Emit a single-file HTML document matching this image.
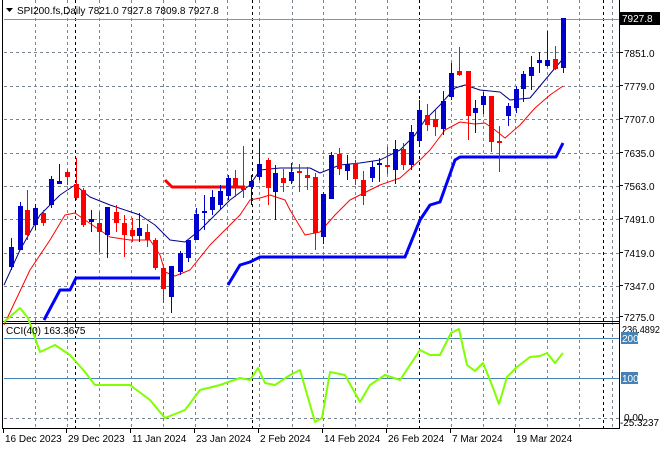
<!DOCTYPE html><html><head><meta charset="utf-8"><style>
body{margin:0;width:660px;height:450px;background:#fff;overflow:hidden;font-family:"Liberation Sans",sans-serif}
svg{position:absolute;left:0;top:0}
text{font-family:"Liberation Sans",sans-serif;font-size:10px;fill:#000}
</style></head><body>
<svg id="s" width="660" height="450" xmlns="http://www.w3.org/2000/svg"></svg>
<script>
var s=document.getElementById('s'),h='';
function L(x1,y1,x2,y2,c,w,d){h+='<line x1="'+x1+'" y1="'+y1+'" x2="'+x2+'" y2="'+y2+'" stroke="'+c+'" stroke-width="'+(w||1)+'"'+(d?' stroke-dasharray="'+d+'"':'')+' shape-rendering="crispEdges"/>';}
function P(pts,c,w){h+='<polyline fill="none" stroke="'+c+'" stroke-width="'+w+'" stroke-linejoin="round" points="'+pts+'"/>';}
function T(x,y,t,a){h+='<text x="'+x+'" y="'+y+'"'+(a||'')+'>'+t+'</text>';}
var gx=[35,67,99,131,163,195,227,259,292,323,355,387,451,483,515,547,579,612];
gx.forEach(function(x){L(x+.5,0,x+.5,321,'#7a8590',1,'3,3');L(x+.5,322,x+.5,428,'#7a8590',1,'3,3');});
[75,252,419,603].forEach(function(x){L(x+.5,0,x+.5,428,'#000',1,'3,3');});
[52,86,119,153,186,219,253,286,317].forEach(function(y){L(4,y+.5,619,y+.5,'#7a8590',1,'3,3');});
L(4,19.5,619,19.5,'#8a949c',1);
L(2.5,0,2.5,428,'#000');L(619.5,0,619.5,428,'#000');
L(2,321.5,620,321.5,'#000');L(2,323.5,620,323.5,'#000');L(2,428.5,620,428.5,'#000');
P('4,325 30,270 50,240 65,215 75,213 85,220 110,237 130,240 150,240 160,255 165,272 175,276 190,270 210,245 225,230 240,215 250,200 260,198 270,195 285,200 290,210 305,235 320,232 335,215 350,200 360,195 380,185 400,178 420,160 430,150 445,130 460,122 475,124 485,123 495,130 505,138 520,125 535,108 550,95 563,86','#f00',1);
P('4,285 20,250 40,215 60,195 75,185 90,197 110,205 140,215 155,225 170,240 185,242 200,230 230,200 250,185 260,170 280,168 310,168 320,173 340,165 360,163 380,160 400,150 415,135 425,120 440,105 455,88 465,85 480,90 500,92 510,100 530,98 545,80 555,68 562,60','#00008b',1);
P('44,320 60,290 70,290 76,278 160,278','#0000ff',3);
P('228,285 240,265 250,262 260,257 405,257 420,220 430,205 440,202 455,160 460,157 556,157 563,143','#0000ff',3);
P('165,180 172,187 245,187','#f00',3);
var C=[[11,238,247,267,270,1],[20,202,206,250,250,1],[27,190,210,235,240,0],[35,204,208,225,230,1],[43,210,213,223,226,0],[51,176,179,205,208,1],[59,164,181,184,184,1],[67,170,172,177,185,0],[76,158,184,198,200,0],[83,188,190,225,227,0],[91,210,219,222,232,1],[99,212,223,232,252,0],[107,207,207,235,258,1],[116,205,212,223,232,0],[124,215,223,235,257,0],[132,218,230,236,242,0],[139,213,228,236,242,1],[147,224,232,240,247,0],[155,238,240,268,270,0],[163,266,268,289,303,0],[171,266,266,297,313,1],[180,251,253,272,275,1],[188,240,240,258,262,1],[196,208,214,240,240,1],[204,195,211,213,230,1],[212,190,197,210,215,1],[220,185,191,205,210,1],[228,175,178,196,200,1],[235,170,178,187,197,0],[243,146,188,190,198,0],[251,175,181,187,205,1],[259,139,164,177,180,1],[268,158,160,188,205,0],[275,165,173,192,220,1],[283,169,178,183,192,0],[291,163,172,181,184,1],[299,164,171,173,192,0],[307,167,175,178,190,0],[315,173,177,233,250,0],[323,192,194,237,244,1],[331,152,155,199,199,1],[339,148,154,169,175,0],[347,155,164,171,180,1],[355,160,163,179,185,0],[363,171,180,196,205,0],[372,161,167,178,182,1],[379,158,163,165,182,1],[387,147,165,167,174,0],[395,140,149,170,184,1],[403,143,149,165,170,0],[411,125,132,165,170,1],[419,100,110,141,145,1],[427,104,115,125,131,0],[435,110,119,127,136,0],[443,91,101,129,135,1],[451,63,73,97,100,1],[459,47,71,75,76,0],[468,71,71,116,140,0],[475,100,108,113,133,1],[483,92,96,105,114,1],[491,96,96,142,152,0],[499,126,141,143,172,0],[508,103,106,116,126,1],[516,86,89,108,113,1],[523,71,74,89,102,1],[531,56,67,76,90,1],[539,52,60,63,73,1],[547,31,60,66,67,1],[555,46,59,69,70,0],[563,18,18,68,73,1]];
C.forEach(function(c){var col=c[5]?'#0000cc':'#f00';L(c[0]+.5,c[1],c[0]+.5,c[4],col,1);var t=Math.min(c[2],c[3]),b=Math.max(c[2],c[3]);if(b-t<1)b=t+1;h+='<rect x="'+(c[0]-2)+'" y="'+t+'" width="5" height="'+(b-t)+'" fill="'+col+'"/>';});
L(4,338.5,619,338.5,'#4682b4');L(4,378.5,619,378.5,'#4682b4');L(4,418.5,619,418.5,'#7a8590',1,'3,3');
P('4,322 20,308 28,318 40,352 55,345 70,355 85,372 95,385 130,385 150,400 165,418 185,410 200,390 220,385 240,378 250,380 258,368 265,383 275,385 290,375 300,370 315,422 322,418 330,372 345,375 360,402 370,385 385,375 400,380 420,350 430,355 440,355 451,333 459,329 467,365 475,371 483,363 490,380 499,404 507,377 517,367 530,357 540,356 547,353 555,363 563,353','#7fff00',2);
h+='<polygon points="6,8 13,8 9.5,12" fill="#000"/>';
T(17,14,'SPI200.fs,Daily  7821.0 7927.8 7809.8 7927.8');
T(6,334,'CCI(40) 163.3675');
h+='<rect x="620" y="12" width="40" height="13" fill="#000"/>';
T(622,22,'7927.8',' style="fill:#fff"');
[['7851.0',57],['7779.0',90],['7707.0',123],['7635.0',157],['7563.0',190],['7491.0',223],['7419.0',257],['7347.0',290],['7275.0',321]].forEach(function(a){L(619,a[1]-4.5,623,a[1]-4.5,'#000');T(624,a[1],a[0]);});
T(622,333,'236.4892',' textLength="38" lengthAdjust="spacingAndGlyphs"');
h+='<rect x="621" y="332" width="17" height="12" fill="#4682b4"/>';T(622,342,'200',' style="fill:#fff"');
h+='<rect x="621" y="372" width="17" height="12" fill="#4682b4"/>';T(622,382,'100',' style="fill:#fff"');
T(624,421,'0.00');T(620,426,'-25.3237',' textLength="39" lengthAdjust="spacingAndGlyphs"');
[['16 Dec 2023',3],['29 Dec 2023',66],['11 Jan 2024',130],['23 Jan 2024',194],['2 Feb 2024',258],['14 Feb 2024',322],['26 Feb 2024',386],['7 Mar 2024',450],['19 Mar 2024',514]].forEach(function(a){L(a[1]+.5,429,a[1]+.5,433,'#000');T(a[1]+2,442,a[0]);});
s.innerHTML=h;
</script></body></html>
